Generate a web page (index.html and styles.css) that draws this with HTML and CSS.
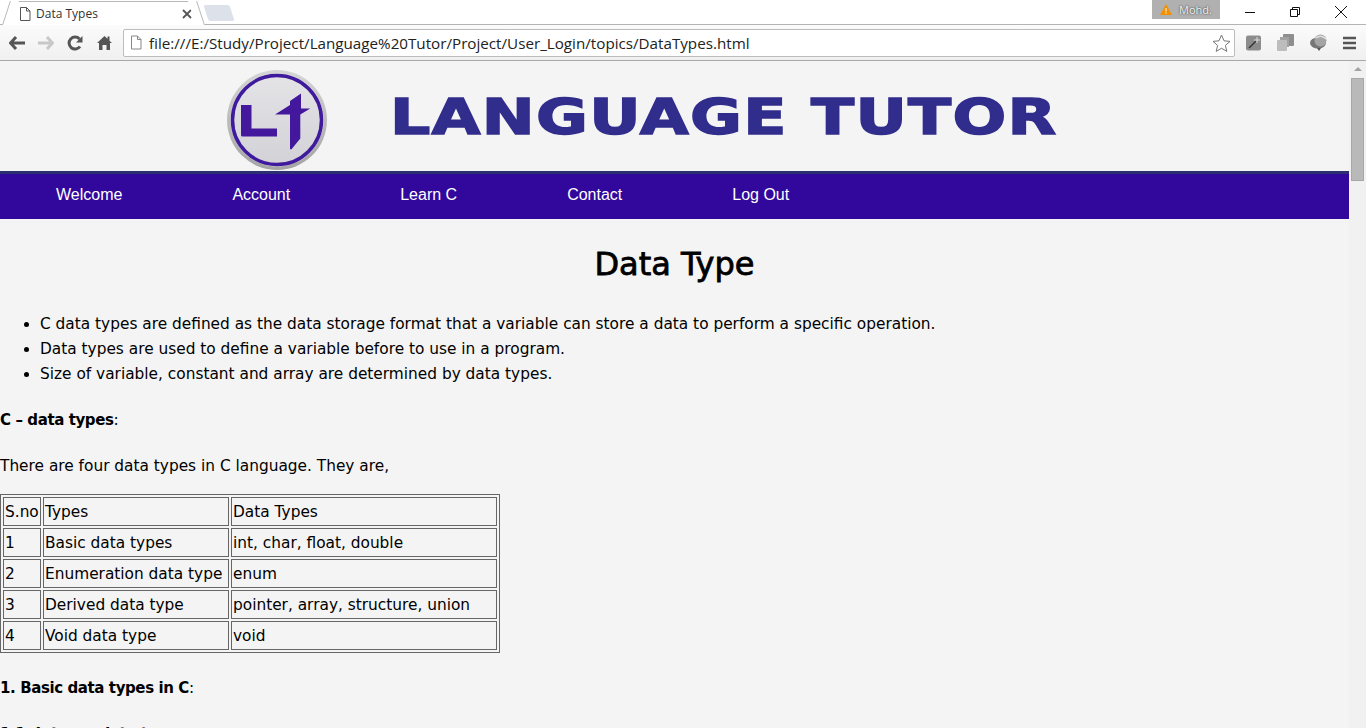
FILE: index.html
```html
<!DOCTYPE html>
<html>
	<head>
		<meta charset="UTF-8">
		<title>Data Types</title>
		<link rel="stylesheet" href="styles.css">
	</head>
	<body>
		<div id="browser">
			<div class="tabbar">
				<div class="tab">
					<svg class="tab-icon" width="12" height="14" viewBox="0 0 12 14"><path d="M1.500 .5h6l3.500 3.500v9.500h-9.500z M7.500 .5v3.500h3.500" fill="#fff" stroke="#555"/></svg>
					<span class="tab-title">Data Types</span>
					<svg class="tab-close" width="10" height="10" viewBox="0 0 10 10"><path d="M1 1l8 8M9 1l-8 8" stroke="#555" stroke-width="1.800"/></svg>
				</div>
				<div class="newtab"></div>
				<div class="spacer"></div>
				<div class="user">
					<svg width="12" height="11" viewBox="0 0 12 11"><path d="M6 0l6 11h-12z" fill="#f29100"/><path d="M6 4v3.500M6 8.500v1.200" stroke="#fff"/></svg>
					<span>Mohd.</span>
				</div>
				<div class="winbtns">
					<svg width="12" height="12" viewBox="0 0 12 12"><path d="M1 6.500h10" stroke="#111"/></svg>
					<svg width="12" height="12" viewBox="0 0 12 12"><path d="M1.500 3.500h7v7h-7z M3.500 3.500v-2h7v7h-2" fill="none" stroke="#111"/></svg>
					<svg width="14" height="14" viewBox="0 0 14 14"><path d="M1 1l12 12M13 1l-12 12" stroke="#111"/></svg>
				</div>
			</div>
			<div class="toolbar">
				<svg class="navicon" width="16" height="14" viewBox="0 0 16 14"><path d="M7 1l-5.500 6 5.500 6M2 7h14" fill="none" stroke="#555" stroke-width="3"/></svg>
				<svg class="navicon" width="16" height="14" viewBox="0 0 16 14"><path d="M9 1l5.500 6-5.500 6M14 7h-14" fill="none" stroke="#c8c8c8" stroke-width="3"/></svg>
				<svg class="navicon" width="16" height="16" viewBox="0 0 16 16"><path d="M13 11.500a6 6 0 1 1 -.5-7.500" fill="none" stroke="#555" stroke-width="3"/><path d="M15.500 1v6.500h-6.500z" fill="#555"/></svg>
				<svg class="navicon" width="15" height="15" viewBox="0 0 15 15"><path d="M7.500 1l3 2.800v-2.300h2v4.200l2.500 2.300h-2v7h-3.500v-5h-4v5h-3.500v-7h-2z" fill="#555"/></svg>
				<div class="omnibox">
					<svg width="12" height="15" viewBox="0 0 12 14"><path d="M1.500 .5h6l3.500 3.500v9.500h-9.500z M7.500 .5v3.500h3.500" fill="#fff" stroke="#888"/></svg>
					<span class="url">file:///E:/Study/Project/Language%20Tutor/Project/User_Login/topics/DataTypes.html</span>
					<svg class="star" width="19" height="18" viewBox="0 0 19 18"><path d="M9.500 1l2.500 5.800 6 .6-4.600 4 1.400 6-5.300-3.200-5.300 3.200 1.400-6-4.600-4 6-.6z" fill="#fff" stroke="#777"/></svg>
				</div>
				<div class="exts">
					<svg width="16" height="16" viewBox="0 0 16 16"><rect width="15" height="15" y=".5" rx="2" fill="#8c8c8c"/><path d="M3 13l7-7" stroke="#333" stroke-width="1.500"/><path d="M11 2v6M8 5h6" stroke="#ddd"/></svg>
					<svg width="18" height="17" viewBox="0 0 18 17"><rect x="6" y="0" width="11" height="12" rx="1" fill="#8e8e8e"/><rect x="3" y="3" width="9" height="10" fill="#a2a2a2"/><rect x="0" y="6" width="10" height="11" rx="1" fill="#bdbdbd"/></svg>
					<svg width="18" height="17" viewBox="0 0 18 17"><ellipse cx="8" cy="9" rx="8" ry="5.500" fill="#777"/><circle cx="10.500" cy="6.500" r="6" fill="#a4a4a4"/><path d="M6 4q5-4 10 1" fill="none" stroke="#e0e0e0" stroke-width="1.500"/><path d="M7 14l2 3 2-3z" fill="#555"/></svg>
					<svg width="14" height="14" viewBox="0 0 14 14"><path d="M0 2h13M0 7h13M0 12h13" stroke="#555" stroke-width="2.600"/></svg>
				</div>
			</div>
			<div class="viewport">
				<div class="page">
					<header class="banner">
						<svg class="logo" width="102" height="102" viewBox="0 0 102 102">
							<defs>
								<linearGradient id="rim" x1="0" y1="0" x2="0" y2="1">
									<stop offset="0" stop-color="#d6d6d6"/>
									<stop offset="1" stop-color="#a4a4a4"/>
								</linearGradient>
								<linearGradient id="disc" x1="0" y1="0" x2="0" y2="1">
									<stop offset="0" stop-color="#e4e4e7"/>
									<stop offset="1" stop-color="#d2d2d7"/>
								</linearGradient>
							</defs>
							<circle cx="51" cy="51" r="50" fill="url(#rim)"/>
							<circle cx="51" cy="51" r="46.500" fill="#e6e6e8"/>
							<circle cx="51" cy="51" r="44.500" fill="url(#disc)" stroke="#3f1a9c" stroke-width="3.500"/>
							<path d="M15 36h10.500v23.500h25.500v8h-34.500q-1.500 0-1.500-1.500z" fill="#43189c"/>
							<path d="M49 45.500l15-9.500v-4l11-7.500v15h9.300l-10 6v24l-9 11-1.300-.5v-34.500z" fill="#43189c"/>
						</svg>
						<div class="wordmark">LANGUAGE TUTOR</div>
					</header>
					<nav class="mainnav">
						<a>Welcome</a>
						<a>Account</a>
						<a>Learn C</a>
						<a>Contact</a>
						<a>Log Out</a>
					</nav>
					<main class="content">
						<h1>Data Type</h1>
						<ul>
							<li>C data types are defined as the data storage format that a variable can store a data to perform a specific operation.</li>
							<li>Data types are used to define a variable before to use in a program.</li>
							<li>Size of variable, constant and array are determined by data types.</li>
						</ul>
						<p><b>C – data types</b>:</p>
						<p class="intro">There are four data types in C language. They are,</p>
						<table>
							<colgroup>
								<col class="col-no">
								<col class="col-type">
								<col class="col-data">
							</colgroup>
							<tr><td>S.no</td><td>Types</td><td>Data Types</td></tr>
							<tr><td>1</td><td>Basic data types</td><td>int, char, float, double</td></tr>
							<tr><td>2</td><td>Enumeration data type</td><td>enum</td></tr>
							<tr><td>3</td><td>Derived data type</td><td>pointer, array, structure, union</td></tr>
							<tr><td>4</td><td>Void data type</td><td>void</td></tr>
						</table>
						<p><b>1. Basic data types in C</b>:</p>
						<p><b>1.1. Integer data type:</b></p>
					</main>
				</div>
				<div class="scrollbar">
					<div class="arrow"></div>
					<div class="thumb"></div>
				</div>
			</div>
		</div>
	</body>
</html>
```

FILE: styles.css
```css
html, body {
	margin: 0;
	height: 100%;
	overflow: hidden;
}
#browser {
	height: 728px;
	display: flex;
	flex-direction: column;
	font-family: "Liberation Sans", Arial, sans-serif;
}
.tabbar {
	height: 25px;
	display: flex;
	background: #fff;
	border-bottom: 1px solid #b4b4b4;
	box-sizing: border-box;
}
.tab {
	position: relative;
	width: 187px;
	height: 24px;
	margin: 1px 0 0 10px;
	padding: 0 5px 0 9px;
	box-sizing: border-box;
	display: flex;
	align-items: center;
	background: #fff;
	border-top: 1px solid #b8b8b8;
}
.tab::before,
.tab::after {
	content: "";
	position: absolute;
	top: -1px;
	bottom: 0;
	width: 8px;
	background: #fff;
	border: 0 solid #b8b8b8;
}
.tab::before {
	left: -4px;
	border-left-width: 1px;
	transform: skewX(-18deg);
}
.tab::after {
	right: -4px;
	border-right-width: 1px;
	transform: skewX(18deg);
}
.tab-icon {
	margin-right: 5px;
}
.tab-title {
	font-family: "Open Sans", sans-serif;
	font-size: 12px;
	color: #333;
	flex: 1;
}
.newtab {
	width: 26px;
	height: 16px;
	margin: 5px 0 0 9px;
	background: #dce1ea;
	border-radius: 2px;
	transform: skewX(18deg);
}
.spacer {
	flex: 1;
}
.user {
	width: 68px;
	height: 19px;
	background: #b0b0b0;
	display: flex;
	align-items: center;
	justify-content: center;
	gap: 7px;
	font-family: "Open Sans", sans-serif;
	font-size: 11px;
	color: #f2f2f2;
	text-shadow: 0 0 2px #222;
}
.winbtns {
	width: 146px;
	height: 24px;
	display: flex;
	align-items: center;
	gap: 33px;
	padding-left: 24px;
	box-sizing: border-box;
}
.toolbar {
	height: 36px;
	display: flex;
	align-items: center;
	padding: 0 0 0 9px;
	box-sizing: border-box;
	background: linear-gradient(#fbfbfb, #f0f0f0);
	border-bottom: 1px solid #a8a8a8;
}
.navicon {
	margin-right: 13px;
}
.navicon:nth-child(3) {
	margin-right: 14px;
}
.navicon:nth-child(4) {
	margin-right: 11px;
}
.omnibox {
	width: 1112px;
	height: 28px;
	box-sizing: border-box;
	background: #fff;
	border: 1px solid #bcbcbc;
	border-radius: 2px;
	display: flex;
	align-items: center;
	padding: 0 3px 0 6px;
}
.url {
	flex: 1;
	margin-left: 7px;
	font-family: "Open Sans", sans-serif;
	font-size: 15.200px;
	color: #222;
	white-space: nowrap;
}
.exts {
	flex: 1;
	display: flex;
	align-items: center;
	justify-content: space-between;
	padding: 0 9px 0 11px;
}
.viewport {
	flex: 1;
	display: flex;
	overflow: hidden;
	background: #f4f4f4;
}
.page {
	flex: 1;
	min-width: 0;
}
.banner {
	height: 110px;
	display: flex;
	align-items: flex-start;
}
.logo {
	margin: 8px 0 0 226px;
	flex: none;
}
.wordmark {
	margin: 23px 0 0 62px;
	font-family: "DejaVu Sans", sans-serif;
	font-weight: bold;
	font-size: 50px;
	line-height: 66px;
	letter-spacing: 1px;
	white-space: nowrap;
	color: #312d8c;
	-webkit-text-stroke: 1.500px #312d8c;
	transform: scaleX(1.265);
	transform-origin: left center;
}
.mainnav {
	height: 48px;
	box-sizing: border-box;
	display: flex;
	align-items: center;
	gap: 110px;
	padding: 0 0 4px 56px;
	background: #32089c;
	border-top: 3px solid #2b2f70;
}
.mainnav a {
	font-size: 16px;
	color: #fff;
}
.content {
	font-family: "DejaVu Sans", sans-serif;
	font-size: 15.360px;
	line-height: 25px;
	color: #000;
}
h1 {
	margin: 26px 0 29px;
	text-align: center;
	font-size: 32px;
	line-height: 38px;
	font-weight: normal;
	-webkit-text-stroke: .8px #000;
}
ul {
	margin: 0 0 21px;
	padding-left: 40px;
}
p {
	margin: 0 0 21px;
}
b {
	font-size: 15px;
	letter-spacing: -.4px;
}
.intro {
	margin-bottom: 15px;
}
table {
	width: 500px;
	table-layout: fixed;
	border: 1px solid #666;
	border-spacing: 2px;
	margin-bottom: 23px;
}
.col-no {
	width: 38px;
}
.col-type {
	width: 186px;
}
.col-data {
	width: 266px;
}
td {
	border: 1px solid #666;
	padding: 1px 1px 0;
	line-height: 26px;
	white-space: nowrap;
}
.scrollbar {
	width: 17px;
	flex: none;
	background: #f1f1f1;
	display: flex;
	flex-direction: column;
	align-items: center;
}
.arrow {
	width: 0;
	height: 0;
	margin-top: 6px;
	border: 4px solid transparent;
	border-top: 0;
	border-bottom: 4px solid #a3a3a3;
}
.thumb {
	width: 13px;
	height: 103px;
	margin-top: 7px;
	background: #b9b9b9;
	border: 1px solid #a8a8a8;
	box-sizing: border-box;
}
```
